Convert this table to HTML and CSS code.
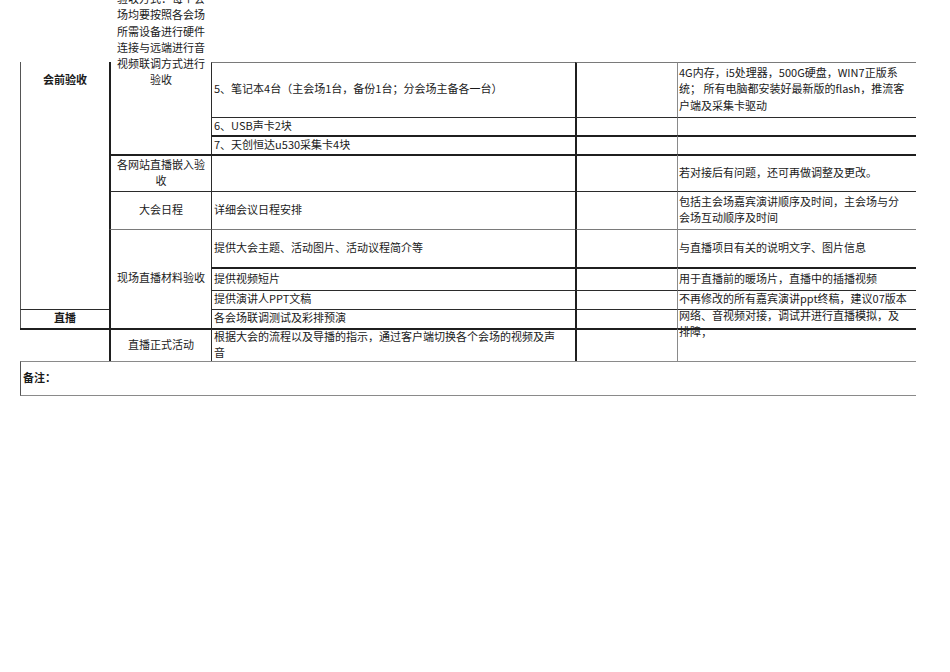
FILE: index.html
```html
<!DOCTYPE html>
<html lang="zh-CN">
<head>
<meta charset="utf-8">
<title>会前验收</title>
<link rel="stylesheet" href="styles.css">
</head>
<body>
<div class="page">
  <div class="sheet">
    <!-- column A -->
    <div class="cell a a1 bold top-start"><div class="pad-a1">会前验收</div></div>
    <div class="cell a a2 bold center t1">直播</div>
    <div class="cell a3 t2"></div>

    <!-- column B -->
    <div class="cell b b1 center top-start"><div class="lift">验收方式：每个会<br>场均要按照各会场<br>所需设备进行硬件<br>连接与远端进行音<br>视频联调方式进行<br>验收</div></div>
    <div class="cell b b2 center t2">各网站直播嵌入验<br>收</div>
    <div class="cell b b3 center t1">大会日程</div>
    <div class="cell b b4 center t1g">现场直播材料验收</div>
    <div class="cell b b5 center t2">直播正式活动</div>

    <!-- row 1 -->
    <div class="cell c r1 t1g">5、笔记本4台（主会场1台，备份1台；分会场主备各一台）</div>
    <div class="cell d r1 t1g"></div>
    <div class="cell e r1 t1g">4G内存，i5处理器，500G硬盘，WIN7正版系<br>统； 所有电脑都安装好最新版的flash，推流客<br>户端及采集卡驱动</div>

    <!-- row 2 -->
    <div class="cell c r2 t1">6、USB声卡2块</div>
    <div class="cell d r2 t1"></div>
    <div class="cell e r2 t1"></div>

    <!-- row 3 -->
    <div class="cell c r3 t2">7、天创恒达u530采集卡4块</div>
    <div class="cell d r3 t2"></div>
    <div class="cell e r3 t2"></div>

    <!-- row 4 -->
    <div class="cell c r4 t2"></div>
    <div class="cell d r4 t2"></div>
    <div class="cell e r4 t2">若对接后有问题，还可再做调整及更改。</div>

    <!-- row 5 -->
    <div class="cell c r5 t1">详细会议日程安排</div>
    <div class="cell d r5 t1"></div>
    <div class="cell e r5 t1">包括主会场嘉宾演讲顺序及时间，主会场与分<br>会场互动顺序及时间</div>

    <!-- row 6 -->
    <div class="cell c r6 t1g">提供大会主题、活动图片、活动议程简介等</div>
    <div class="cell d r6 t1g"></div>
    <div class="cell e r6 t1g">与直播项目有关的说明文字、图片信息</div>

    <!-- row 7 -->
    <div class="cell c r7 t2">提供视频短片</div>
    <div class="cell d r7 t2"></div>
    <div class="cell e r7 t2">用于直播前的暖场片，直播中的插播视频</div>

    <!-- row 8 -->
    <div class="cell c r8 t1">提供演讲人PPT文稿</div>
    <div class="cell d r8 t1"></div>
    <div class="cell e r8 t1">不再修改的所有嘉宾演讲ppt终稿，建议07版本</div>

    <!-- row 9 -->
    <div class="cell c r9 t1">各会场联调测试及彩排预演</div>
    <div class="cell d r9 t1"></div>
    <div class="cell e r9 t1 top-start"><div class="lift-small">网络、音视频对接，调试并进行直播模拟，及<br>排障；</div></div>

    <!-- row 10 -->
    <div class="cell c r10 t2">根据大会的流程以及导播的指示，通过客户端切换各个会场的视频及声<br>音</div>
    <div class="cell d r10 t2"></div>
    <div class="cell e r10 t2"></div>

    <!-- remark -->
    <div class="cell remark bold">备注：</div>
  </div>
</div>
</body>
</html>
```

FILE: styles.css
```css
html, body {
  margin: 0;
  padding: 0;
  background: #ffffff;
}

body {
  font-family: "Noto Sans CJK SC", "Noto Sans", sans-serif;
  font-size: 11px;
  line-height: 16.3px;
  color: #1a1a1a;
}

.page {
  padding: 62px 0 0 20px;
}

.sheet {
  display: grid;
  width: 896px;
  grid-template-columns: 89px 102px 364px 102px 239px;
  grid-template-rows: 55px 18px 19px 37px 38px 38px 23px 19px 19px 33px 35px;
}

.cell {
  box-sizing: border-box;
  display: flex;
  align-items: center;
  white-space: nowrap;
  min-width: 0;
  overflow: visible;
  padding-bottom: 3px;
}

.center {
  justify-content: center;
  text-align: center;
}

.top-start {
  align-items: flex-start;
}

.bold {
  font-weight: 700;
}

/* top borders */
.t1 { border-top: 1px solid #2b2b2b; }
.t1g { border-top: 1px solid #7a7a7a; }
.t2 { border-top: 2px solid #1f1f1f; }

/* columns */
.a {
  grid-column: 1;
  border-left: 1px solid #555555;
}
.b {
  grid-column: 2;
  border-left: 2px solid #1f1f1f;
}
.c {
  grid-column: 3;
  border-left: 1px solid #2b2b2b;
  padding-left: 2px;
}
.d {
  grid-column: 4;
  border-left: 2px solid #1f1f1f;
}
.e {
  grid-column: 5;
  border-left: 1px solid #8a8a8a;
  padding-left: 1px;
}

.a1 { grid-row: 1 / 9; }
.a2 { grid-row: 9; }
.a3 { grid-column: 1; grid-row: 10; }

.pad-a1 {
  width: 100%;
  text-align: center;
  padding-top: 9px;
}

.b1 { grid-row: 1 / 4; }
.b2 { grid-row: 4; }
.b3 { grid-row: 5; }
.b4 { grid-row: 6 / 10; }
.b5 { grid-row: 10; }

.lift {
  margin-top: -72px;
  width: 100%;
}

.lift-small {
  margin-top: -3px;
}

.r1 { grid-row: 1; }
.r2 { grid-row: 2; }
.r3 { grid-row: 3; }
.r4 { grid-row: 4; }
.r5 { grid-row: 5; }
.r6 { grid-row: 6; }
.r7 { grid-row: 7; }
.r8 { grid-row: 8; }
.r9 { grid-row: 9; }
.r10 { grid-row: 10; }

.remark {
  grid-column: 1 / -1;
  grid-row: 11;
  border-top: 1px solid #8a8a8a;
  border-left: 1px solid #555555;
  border-bottom: 1px solid #8a8a8a;
  padding-left: 2px;
}
```
